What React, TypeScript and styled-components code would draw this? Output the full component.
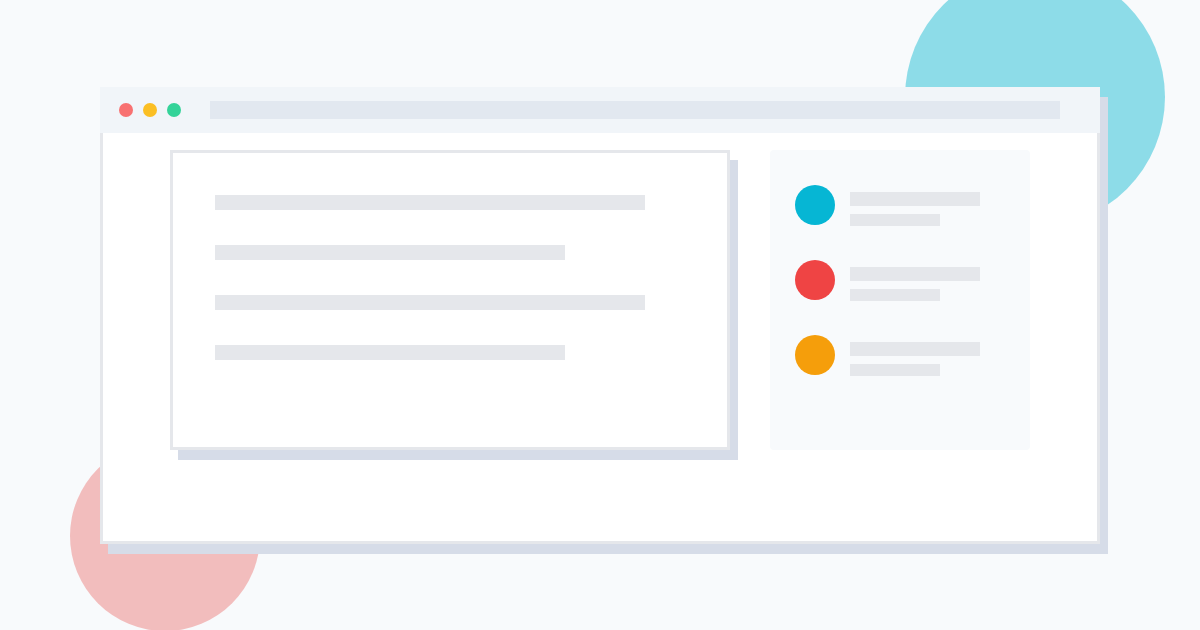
import React from 'react';
import styled, { createGlobalStyle } from 'styled-components';

const GlobalStyle = createGlobalStyle`
  html, body {
    margin: 0;
    padding: 0;
    background: #f8fafc;
    font-family: "Liberation Sans", Arial, sans-serif;
  }
`;

const Stage = styled.div`
  position: relative;
  width: 1200px;
  height: 630px;
  overflow: hidden;
  background: #f8fafc;
  padding: 87px 0 0 100px;
  box-sizing: border-box;
`;

const Blob = styled.div<{ size: number; color: string; left: number; top: number }>`
  position: absolute;
  left: ${p => p.left}px;
  top: ${p => p.top}px;
  width: ${p => p.size}px;
  height: ${p => p.size}px;
  border-radius: 50%;
  background: ${p => p.color};
`;

const Window = styled.div`
  position: relative;
  width: 1000px;
  display: flex;
  flex-direction: column;
  background: #ffffff;
  box-shadow: 8px 10px 0 #d6dce8;
`;

const TitleBar = styled.div`
  height: 46px;
  display: flex;
  align-items: center;
  gap: 10px;
  padding: 0 40px 0 19px;
  background: #f1f5f9;
`;

const Dot = styled.span<{ color: string }>`
  width: 14px;
  height: 14px;
  border-radius: 50%;
  background: ${p => p.color};
`;

const AddressBar = styled.div`
  flex: 1;
  height: 18px;
  margin-left: 19px;
  background: #e2e8f0;
`;

const Body = styled.div`
  height: 411px;
  display: flex;
  gap: 40px;
  padding: 17px 67px 0 67px;
  border: 3px solid #e5e7eb;
  border-top: none;
  box-sizing: border-box;
`;

const Card = styled.div`
  width: 560px;
  height: 300px;
  box-sizing: border-box;
  border: 3px solid #e5e7eb;
  background: #ffffff;
  box-shadow: 8px 10px 0 #d6dce8;
  padding: 42px 0 0 42px;
  display: flex;
  flex-direction: column;
  gap: 35px;
`;

const TextLine = styled.div<{ width: number }>`
  width: ${p => p.width}px;
  height: 15px;
  background: #e5e7eb;
`;

const Side = styled.div`
  width: 260px;
  height: 300px;
  box-sizing: border-box;
  background: #f8fafc;
  border-radius: 4px;
  padding: 35px 25px;
  display: flex;
  flex-direction: column;
  gap: 34px;
`;

const Person = styled.div`
  display: flex;
  gap: 15px;
`;

const Avatar = styled.span<{ color: string }>`
  width: 40px;
  height: 40px;
  border-radius: 50%;
  background: ${p => p.color};
`;

const Lines = styled.div`
  display: flex;
  flex-direction: column;
  gap: 8px;
  padding-top: 7px;
`;

const Bar = styled.div<{ width: number; height: number }>`
  width: ${p => p.width}px;
  height: ${p => p.height}px;
  background: #e5e7eb;
`;

const people = ['#06b6d4', '#ef4444', '#f59e0b'];

export default function App() {
  return (
    <>
      <GlobalStyle />
      <Stage>
        <Blob size={260} color="#8ddce8" left={905} top={-33} />
        <Blob size={190} color="#f2bdbd" left={70} top={441} />
        <Window>
          <TitleBar>
            <Dot color="#f87171" />
            <Dot color="#fbbf24" />
            <Dot color="#34d399" />
            <AddressBar />
          </TitleBar>
          <Body>
            <Card>
              <TextLine width={430} />
              <TextLine width={350} />
              <TextLine width={430} />
              <TextLine width={350} />
            </Card>
            <Side>
              {people.map(c => (
                <Person key={c}>
                  <Avatar color={c} />
                  <Lines>
                    <Bar width={130} height={14} />
                    <Bar width={90} height={12} />
                  </Lines>
                </Person>
              ))}
            </Side>
          </Body>
        </Window>
      </Stage>
    </>
  );
}
